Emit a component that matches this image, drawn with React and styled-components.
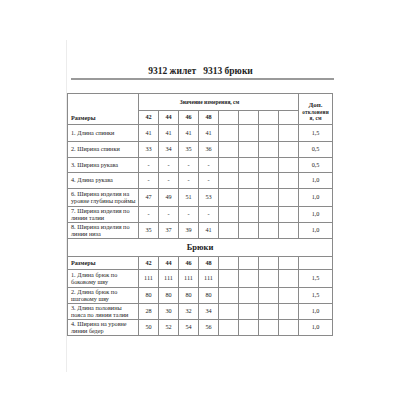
import React from "react";
import styled, { createGlobalStyle } from "styled-components";

const GlobalStyle = createGlobalStyle`
  html, body {
    margin: 0;
    padding: 0;
    background: #ffffff;
  }
  body {
    font-family: "Liberation Serif", "Times New Roman", serif;
    color: #1e1e1e;
  }
`;

const Page = styled.div`
  width: 400px;
  height: 400px;
  background: #fff;
  padding-top: 40px;
  box-sizing: border-box;
`;

const Sheet = styled.div`
  margin-left: 66px;
  height: 332px;
  border-left: 1px solid #ececec;
`;

const Title = styled.div`
  padding-top: 26px;
  width: 267px;
  text-align: center;
  font-weight: bold;
  font-size: 9.5px;
  line-height: 11px;
  white-space: pre;
`;

const TitleRule = styled.div`
  margin: 1px 0 0 4px;
  width: 263px;
  height: 2px;
  background: #9a9a9a;
`;

const Table = styled.table`
  margin-top: 13px;
  border-collapse: collapse;
  table-layout: fixed;
  width: 265px;
  font-size: 6.2px;
  line-height: 6.5px;
`;

const Row = styled.tr`
  height: ${(p) => p.$h}px;
`;

const Cell = styled.td`
  border: 1px solid #8a8a8a;
  padding: 0;
  text-align: center;
  vertical-align: middle;
  white-space: nowrap;
  font-weight: ${(p) => (p.$bold ? "bold" : "normal")};
`;

const LabelCell = styled(Cell)`
  text-align: left;
  padding-left: 3px;
  vertical-align: ${(p) => (p.$bottom ? "bottom" : "middle")};
  padding-bottom: ${(p) => (p.$bottom ? "3px" : "0")};
`;

const HeadCell = styled(Cell)`
  font-weight: bold;
  font-size: 5.5px;
  padding-right: 18px;
`;

const DevCell = styled(Cell)`
  font-weight: bold;
  font-size: 5.2px;
  line-height: 6px;
  letter-spacing: 0.2px;
  padding-top: 3px;
`;

const DevTitle = styled.div`
  font-size: 7px;
  line-height: 8px;
  letter-spacing: 0;
`;

const SectionCell = styled(Cell)`
  font-weight: bold;
  font-size: 8.5px;
`;

const sizes = ["42", "44", "46", "48"];

const vest = [
  { h: 17, label: ["1. Длина спинки"], v: ["41", "41", "41", "41"], d: "1,5" },
  { h: 16, label: ["2. Ширина спинки"], v: ["33", "34", "35", "36"], d: "0,5" },
  { h: 15, label: ["3. Ширина рукава"], v: ["-", "-", "-", "-"], d: "0,5" },
  { h: 16, label: ["4. Длина рукава"], v: ["-", "-", "-", "-"], d: "1,0" },
  {
    h: 18,
    label: ["6. Ширина изделия на", "уровне глубины проймы"],
    v: ["47", "49", "51", "53"],
    d: "1,0",
  },
  {
    h: 16,
    label: ["7. Ширина изделия по", "линии талии"],
    v: ["-", "-", "-", "-"],
    d: "1,0",
  },
  {
    h: 16,
    label: ["8. Ширина изделия по", "линии низа"],
    v: ["35", "37", "39", "41"],
    d: "1,0",
  },
];

const trousers = [
  {
    h: 18,
    label: ["1. Длина брюк по", "боковому шву"],
    v: ["111", "111", "111", "111"],
    d: "1,5",
  },
  {
    h: 16,
    label: ["2. Длина брюк по", "шаговому шву"],
    v: ["80", "80", "80", "80"],
    d: "1,5",
  },
  {
    h: 16,
    label: ["3. Длина половины", "пояса по линии талии"],
    v: ["28", "30", "32", "34"],
    d: "1,0",
  },
  {
    h: 16,
    label: ["4. Ширина на уровне", "линии бедер"],
    v: ["50", "52", "54", "56"],
    d: "1,0",
  },
];

function Label({ lines }) {
  return lines.map((l, i) => (
    <React.Fragment key={i}>
      {i > 0 && <br />}
      {l}
    </React.Fragment>
  ));
}

function Blanks() {
  return [0, 1, 2, 3].map((i) => <Cell key={`b${i}`} />);
}

function DataRow({ row }) {
  return (
    <Row $h={row.h}>
      <LabelCell>
        <Label lines={row.label} />
      </LabelCell>
      {row.v.map((x, i) => (
        <Cell key={i}>{x}</Cell>
      ))}
      <Blanks />
      <Cell>{row.d}</Cell>
    </Row>
  );
}

function SizeCells() {
  return sizes.map((s) => (
    <Cell key={s} $bold>
      {s}
    </Cell>
  ));
}

export default function App() {
  return (
    <Page>
      <GlobalStyle />
      <Sheet>
        <Title>{"9312 жилет   9313 брюки"}</Title>
        <TitleRule />
        <Table>
          <colgroup>
            <col style={{ width: 71 }} />
            {[0, 1, 2, 3, 4, 5, 6, 7].map((i) => (
              <col key={i} style={{ width: 20 }} />
            ))}
            <col style={{ width: 34 }} />
          </colgroup>
          <tbody>
            <Row $h={17}>
              <LabelCell rowSpan={2} $bold $bottom>
                Размеры
              </LabelCell>
              <HeadCell colSpan={8}>Значение измерения, см</HeadCell>
              <DevCell rowSpan={2}>
                <DevTitle>Доп.</DevTitle>
                отклонени
                <br />я, см
              </DevCell>
            </Row>
            <Row $h={14}>
              <SizeCells />
              <Blanks />
            </Row>
            {vest.map((r, i) => (
              <DataRow key={i} row={r} />
            ))}
            <Row $h={18}>
              <SectionCell colSpan={10}>Брюки</SectionCell>
            </Row>
            <Row $h={13}>
              <LabelCell $bold>Размеры</LabelCell>
              <SizeCells />
              <Blanks />
              <Cell />
            </Row>
            {trousers.map((r, i) => (
              <DataRow key={i} row={r} />
            ))}
          </tbody>
        </Table>
      </Sheet>
    </Page>
  );
}
